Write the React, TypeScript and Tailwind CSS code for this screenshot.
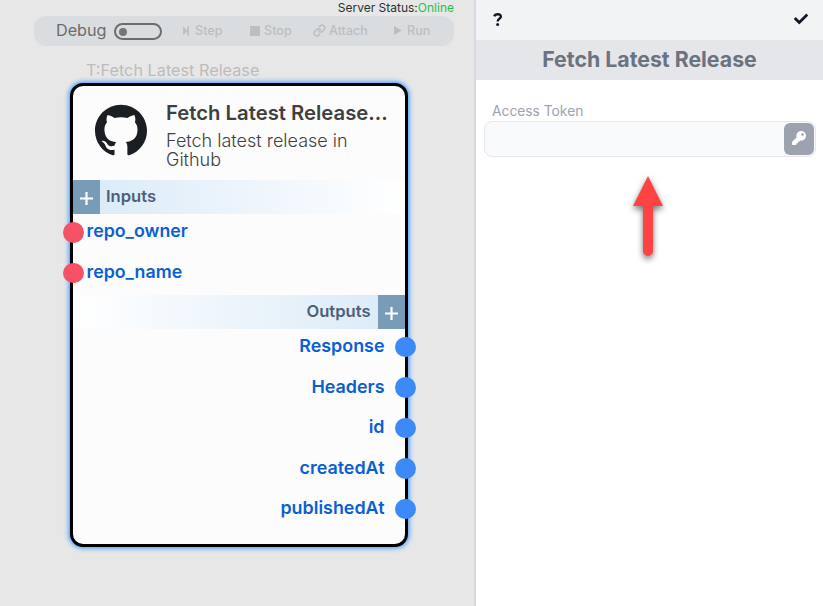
import React from "react";
import { FaCheck, FaKey } from "react-icons/fa";
import { SiGithub } from "react-icons/si";

const inputs = ["repo_owner", "repo_name"];
const outputs = ["Response", "Headers", "id", "createdAt", "publishedAt"];

function Plus() {
  return (
    <span className="flex h-full w-[27px] items-center justify-center bg-[#789cb8] pt-[3px]">
      <svg width="13" height="13" viewBox="0 0 13 13" stroke="#fff" strokeWidth="2.2">
        <path d="M6.5 0v13M0 6.5h13" />
      </svg>
    </span>
  );
}

function StepIcon() {
  return (
    <svg width="7" height="10" viewBox="0 0 7 10" fill="currentColor">
      <path d="M0 .5 4.5 5 0 9.5ZM4.3.5h1.7v9H4.3Z" />
    </svg>
  );
}

function LinkIcon() {
  return (
    <svg width="13" height="13" viewBox="0 0 24 24" fill="none" stroke="currentColor" strokeWidth="2.8" strokeLinecap="round">
      <path d="M10 13a5 5 0 0 0 7.54.54l3-3a5 5 0 0 0-7.07-7.07l-1.72 1.71M14 11a5 5 0 0 0-7.54-.54l-3 3a5 5 0 0 0 7.07 7.07l1.71-1.71" />
    </svg>
  );
}

function Toolbar() {
  return (
    <div className="ml-[34px] flex h-[30px] w-[420px] items-center rounded-[12px] bg-[#d9dde0] pl-[22px] text-[12.6px] font-medium text-[#bebebe]">
      <span className="w-[58px] pb-px text-[16.2px] font-normal text-[#6c6c6c]">Debug</span>
      <span className="mt-px flex h-[17px] w-[48px] items-center rounded-full border-2 border-[#6c6c6c] pl-[3px]">
        <span className="size-2 rounded-full bg-[#757575]" />
      </span>
      <span className="ml-[21px] flex w-[67px] items-center gap-[5px]">
        <StepIcon /> Step
      </span>
      <span className="flex w-[63px] items-center gap-[4px]">
        <span className="size-[10px] bg-[#bebebe]" /> Stop
      </span>
      <span className="flex w-[81px] items-center gap-[3px]">
        <LinkIcon /> Attach
      </span>
      <span className="flex items-center gap-[5px]">
        <svg width="8" height="9" viewBox="0 0 8 9" fill="currentColor">
          <path d="M0 0 8 4.5 0 9Z" />
        </svg>
        Run
      </span>
    </div>
  );
}

function NodeCard() {
  return (
    <div className="absolute top-[83px] left-[70px] flex h-[464px] w-[337.5px] flex-col rounded-[13px] border-[3px] border-black bg-[#fcfcfc] shadow-[0_0_5px_1px_#2f95ff]">
      <div className="flex h-[94px] shrink-0 pt-[17px] pl-[22px]">
        <SiGithub className="mt-[0.5px] size-[52px] shrink-0 text-[#1b1f23]" />
        <div className="ml-[19px] w-[225px] text-[#3f3f3f]">
          <div className="-mt-[4px] text-[20.3px] leading-[28px] font-semibold whitespace-nowrap">Fetch Latest Release...</div>
          <div className="mt-[4px] w-[200px] text-[18px] leading-[19px] font-light">Fetch latest release in Github</div>
        </div>
      </div>
      <div className="flex h-[34px] shrink-0 items-center bg-linear-to-r from-[#d9eaf7] to-white text-[16.6px] font-semibold text-[#4d6078]">
        <Plus />
        <span className="ml-[6px] pb-[2px]">Inputs</span>
      </div>
      {inputs.map((name) => (
        <div key={name} className="flex h-[40.5px] shrink-0 items-center pb-[4px] text-[17.8px] font-semibold text-[#0a60d0]">
          <span className="-ml-[10px] size-[20.5px] shrink-0 rounded-full bg-[#f65164]" />
          <span className="ml-[3px] pb-[1px]">{name}</span>
        </div>
      ))}
      <div className="flex h-[34px] shrink-0 items-center justify-end bg-linear-to-r from-white to-[#d9eaf7] text-[16.6px] font-semibold text-[#4d6078]">
        <span className="mr-[7px] pb-[2px]">Outputs</span>
        <Plus />
      </div>
      {outputs.map((name) => (
        <div key={name} className="flex h-[40.5px] shrink-0 items-center justify-end pb-[5px] text-[17.9px] font-semibold text-[#0a60d0]">
          <span className="mr-[10.5px]">{name}</span>
          <span className="-mr-[11px] size-[20.5px] shrink-0 rounded-full bg-[#3b8af8]" />
        </div>
      ))}
    </div>
  );
}

export default function App() {
  return (
    <div className="flex h-[606px] w-[823px] overflow-hidden bg-white font-['Inter',sans-serif]">
      <main className="relative w-[474px] shrink-0 bg-[#e7e7e7]">
        <div className="flex h-4 justify-end pr-[20px] text-[12px] leading-4 text-[#303030]">
          Server Status:<span className="text-[#1fc14b]">Online</span>
        </div>
        <Toolbar />
        <div className="mt-[12px] ml-[86px] text-[16.25px] leading-[24px] text-[#bcbcbc]">T:Fetch Latest Release</div>
        <NodeCard />
      </main>
      <aside className="relative flex min-w-0 flex-1 flex-col border-l-2 border-[#d6d9de]">
        <div className="flex h-10 items-center justify-between bg-[#f2f3f5] pr-[15px] pl-[17px] text-[#111827]">
          <svg className="-mt-px" width="10" height="13" viewBox="0 0 10 13" fill="none" stroke="currentColor" strokeWidth="2.4">
            <path d="M1.3 3.4C2 .7 7.9.4 7.9 3.4 7.9 5.8 4.7 5.6 4.7 8.6" />
            <circle cx="4.6" cy="11.4" r="1.5" fill="currentColor" stroke="none" />
          </svg>
          <FaCheck className="-mt-[2px] size-[14px]" />
        </div>
        <h1 className="h-10 bg-[#e5e6ea] text-center text-[21.3px] leading-[38px] font-bold text-[#6b7280]">Fetch Latest Release</h1>
        <label className="mt-[21px] ml-[16px] text-[13.8px] leading-5 text-[#9ca3af]">Access Token</label>
        <div className="mr-[7px] ml-[8px] flex h-[36px] items-center justify-end rounded-lg border border-[#e5e7eb] bg-[#f9fafb] pr-px">
          <button className="flex h-8 w-[30px] items-center justify-center rounded-md bg-[#9ca3af] pb-[3px] text-white">
            <FaKey className="size-[14px]" />
          </button>
        </div>
        <svg className="absolute top-[165px] left-[145px] overflow-visible drop-shadow-[0_3px_3px_rgba(0,0,0,0.55)]" width="55" height="105" viewBox="0 0 55 105">
          <path d="M27 11 42 41H32V86a5 5 0 0 1-10 0V41H12Z" fill="#ff4343" />
        </svg>
      </aside>
    </div>
  );
}
